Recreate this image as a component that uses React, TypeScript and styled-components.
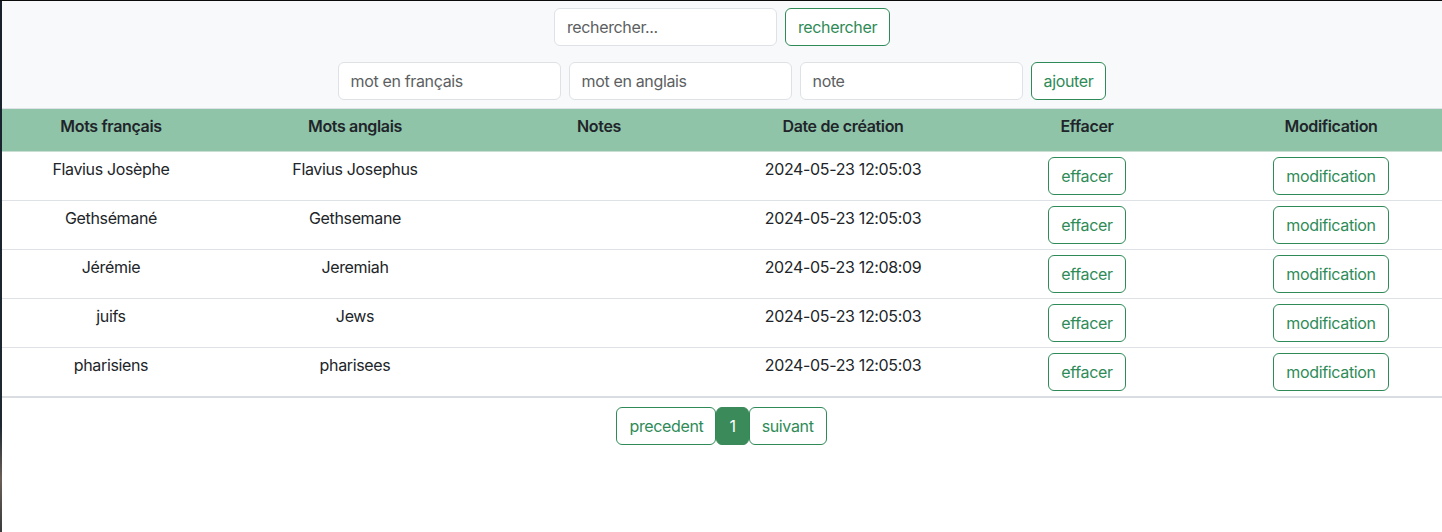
import React from 'react';
import styled, { createGlobalStyle } from 'styled-components';

const GlobalStyle = createGlobalStyle`
  * {
    box-sizing: border-box;
  }
  body {
    margin: 0;
    background: #ffffff;
    color: #212529;
    font-family: Inter, "Noto Sans", "Liberation Sans", sans-serif;
    font-size: 16px;
    line-height: 24px;
    letter-spacing: -0.35px;
  }
`;

const Page = styled.div`
  position: relative;
  min-height: 532px;
  overflow: hidden;
  padding-top: 1px;

  /* window frame edges visible in the capture */
  &::before {
    content: '';
    position: absolute;
    left: 0;
    top: 0;
    bottom: 0;
    width: 2px;
    background: linear-gradient(180deg, #18212b 0%, #1d2833 80%, #6b5f58 90%, #3a3a3d 100%);
    z-index: 2;
  }
  &::after {
    content: '';
    position: absolute;
    left: 0;
    right: 0;
    top: 0;
    height: 1px;
    background: #0b0b0b;
    z-index: 2;
  }
`;

const Toolbar = styled.div`
  background: #f8f9fa;
  padding: 7px 0 8px;
  display: flex;
  flex-direction: column;
  align-items: center;
  gap: 16px;
`;

const FormRow = styled.div`
  display: flex;
  align-items: center;
  gap: 8px;
  margin-left: 2px;
`;

const TextInput = styled.input`
  width: 223px;
  height: 38px;
  padding: 6px 12px;
  font: inherit;
  letter-spacing: inherit;
  color: #212529;
  background: #ffffff;
  border: 1px solid #dee2e6;
  border-radius: 6px;
  outline: none;

  &::placeholder {
    color: #5c5f62;
  }
`;

const OutlineButton = styled.button`
  height: 38px;
  padding: 6px 12px;
  font: inherit;
  letter-spacing: inherit;
  color: #2e8b57;
  background: #ffffff;
  border: 1px solid #2e8b57;
  border-radius: 6px;
  cursor: pointer;
  white-space: nowrap;
`;

const TableWrap = styled.div`
  width: 1464px;
  margin-left: -11px;
`;

const Table = styled.table`
  width: 100%;
  table-layout: fixed;
  border-collapse: collapse;
`;

const Th = styled.th`
  width: 244px;
  background: #8fc4a9;
  padding: 5px 8px 13px;
  font-weight: 600;
  text-align: center;
  vertical-align: top;
  border-top: 1px solid #dee2e6;
  border-bottom: 1px solid #c9dfd3;
`;

const Row = styled.tr<{ $last?: boolean }>`
  border-bottom: ${({ $last }) => ($last ? '2px solid #dadee2' : '1px solid #dee2e6')};
`;

const Td = styled.td`
  padding: 5px 8px;
  text-align: center;
  vertical-align: top;
  background: #ffffff;
`;

const Pagination = styled.nav`
  display: flex;
  justify-content: center;
  margin-top: 9px;
  margin-left: 1px;
`;

const PageButton = styled(OutlineButton)<{ $active?: boolean }>`
  padding: 6px 12px;
  color: ${({ $active }) => ($active ? '#ffffff' : '#2e8b57')};
  background: ${({ $active }) => ($active ? '#3b8a59' : '#ffffff')};
  border-color: ${({ $active }) => ($active ? '#3b8a59' : '#2e8b57')};
`;

const words = [
  { fr: 'Flavius Josèphe', en: 'Flavius Josephus', note: '', date: '2024-05-23 12:05:03' },
  { fr: 'Gethsémané', en: 'Gethsemane', note: '', date: '2024-05-23 12:05:03' },
  { fr: 'Jérémie', en: 'Jeremiah', note: '', date: '2024-05-23 12:08:09' },
  { fr: 'juifs', en: 'Jews', note: '', date: '2024-05-23 12:05:03' },
  { fr: 'pharisiens', en: 'pharisees', note: '', date: '2024-05-23 12:05:03' },
];

const App: React.FC = () => {
  return (
    <Page>
      <GlobalStyle />
      <Toolbar>
        <FormRow>
          <TextInput placeholder="rechercher..." />
          <OutlineButton>rechercher</OutlineButton>
        </FormRow>
        <FormRow>
          <TextInput placeholder="mot en français" />
          <TextInput placeholder="mot en anglais" />
          <TextInput placeholder="note" />
          <OutlineButton>ajouter</OutlineButton>
        </FormRow>
      </Toolbar>

      <TableWrap>
        <Table>
          <thead>
            <tr>
              <Th>Mots français</Th>
              <Th>Mots anglais</Th>
              <Th>Notes</Th>
              <Th>Date de création</Th>
              <Th>Effacer</Th>
              <Th>Modification</Th>
            </tr>
          </thead>
          <tbody>
            {words.map((w, i) => (
              <Row key={w.fr} $last={i === words.length - 1}>
                <Td>{w.fr}</Td>
                <Td>{w.en}</Td>
                <Td>{w.note}</Td>
                <Td>{w.date}</Td>
                <Td>
                  <OutlineButton>effacer</OutlineButton>
                </Td>
                <Td>
                  <OutlineButton>modification</OutlineButton>
                </Td>
              </Row>
            ))}
          </tbody>
        </Table>
      </TableWrap>

      <Pagination>
        <PageButton>precedent</PageButton>
        <PageButton $active>1</PageButton>
        <PageButton>suivant</PageButton>
      </Pagination>
    </Page>
  );
};

export default App;
